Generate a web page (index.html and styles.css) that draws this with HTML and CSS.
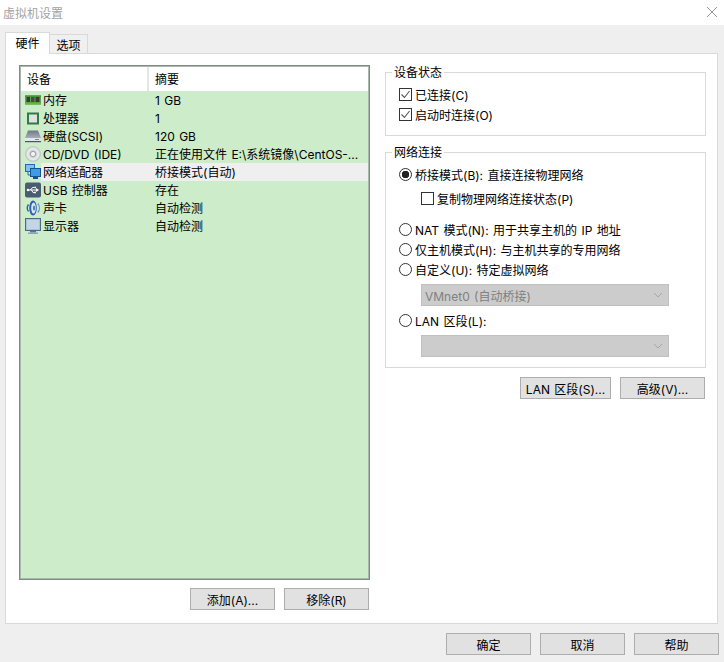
FILE: index.html
```html
<!DOCTYPE html>
<html lang="zh-CN">
<head>
<meta charset="utf-8">
<title>虚拟机设置</title>
<link rel="stylesheet" href="styles.css">
</head>
<body>
<div class="window">
  <div class="titlebar">
    <span>虚拟机设置</span>
    <svg class="close" viewBox="0 0 10 10"><path d="M0 0l10 10M10 0L0 10" fill="none" stroke="#777" stroke-width="0.800"/></svg>
  </div>
  <div class="content">
    <div class="tabs">
      <div class="tab active">硬件</div>
      <div class="tab">选项</div>
    </div>
    <div class="panel">
      <div class="left">
        <div class="list">
          <div class="list-head">
            <div class="col-device">设备</div>
            <div class="col-summary">摘要</div>
          </div>
          <div class="row">
            <div class="col-device">
              <svg class="icon" viewBox="0 0 16 16"><rect x="0" y="3.500" width="16" height="9" fill="#5aa845"/><rect x="0" y="3.500" width="16" height="1" fill="#3c7d2c"/><rect x="0" y="11.500" width="16" height="1.500" fill="#74c15c"/><rect x="1.500" y="5" width="3.500" height="5" fill="#3a3a3a"/><rect x="6" y="5" width="3.500" height="5" fill="#4a4a4a"/><rect x="10.500" y="5" width="4" height="5" fill="#3a3a3a"/></svg>
              <span class="name">内存</span>
            </div>
            <div class="col-summary">1 GB</div>
          </div>
          <div class="row">
            <div class="col-device">
              <svg class="icon" viewBox="0 0 16 16"><rect x="2" y="2.500" width="12" height="12" fill="#2f7a45"/><rect x="4" y="4.500" width="8" height="8" fill="#dfe2e0"/></svg>
              <span class="name">处理器</span>
            </div>
            <div class="col-summary">1</div>
          </div>
          <div class="row">
            <div class="col-device">
              <svg class="icon" viewBox="0 0 16 16"><defs><linearGradient id="hd" x1="0" y1="0" x2="0" y2="1"><stop offset="0" stop-color="#6f7a86"/><stop offset="1" stop-color="#a6afb8"/></linearGradient></defs><path d="M3 2.500h10l3 7.500H0z" fill="url(#hd)"/><rect x="0" y="10" width="16" height="4" fill="#e4e8ea"/><rect x="0" y="13" width="16" height="1.200" fill="#4b5560"/><rect x="10" y="11" width="4" height="1" fill="#7b8791"/></svg>
              <span class="name">硬盘(SCSI)</span>
            </div>
            <div class="col-summary">120 GB</div>
          </div>
          <div class="row">
            <div class="col-device">
              <svg class="icon" viewBox="0 0 16 16"><defs><radialGradient id="cd" cx="0.500" cy="0.500" r="0.500"><stop offset="0.300" stop-color="#c2c6c9"/><stop offset="0.700" stop-color="#eceeef"/><stop offset="1" stop-color="#b5babd"/></radialGradient></defs><circle cx="8" cy="8" r="7.800" fill="url(#cd)"/><circle cx="8" cy="8" r="2.600" fill="#f4f5f5" stroke="#8c9296" stroke-width="0.800"/></svg>
              <span class="name">CD/DVD (IDE)</span>
            </div>
            <div class="col-summary">正在使用文件 E:\系统镜像\CentOS-...</div>
          </div>
          <div class="row selected">
            <div class="col-device">
              <svg class="icon" viewBox="0 0 16 16"><rect x="0.500" y="0.500" width="9" height="7" fill="#7fc0ee" stroke="#1d6db5"/><path d="M3 8v3h3" fill="none" stroke="#1d6db5" stroke-width="1"/><rect x="5.500" y="4.500" width="10" height="8" fill="#3f9be4" stroke="#14558f"/><rect x="8" y="13" width="5" height="2" fill="#14558f"/></svg>
              <span class="name">网络适配器</span>
            </div>
            <div class="col-summary">桥接模式(自动)</div>
          </div>
          <div class="row">
            <div class="col-device">
              <svg class="icon" viewBox="0 0 16 16"><rect x="0" y="0.500" width="16" height="15" rx="2" fill="#4a5c6f"/><path d="M3.500 8h8M5.500 8l2-2.500h2M6.500 8l1.500 2.500h1.500" fill="none" stroke="#fff" stroke-width="1"/><path d="M11 6l3 2-3 2z" fill="#fff"/><circle cx="3" cy="8" r="1.300" fill="#fff"/><rect x="9.500" y="4.700" width="1.500" height="1.500" fill="#fff"/><circle cx="10" cy="10.500" r="1" fill="#fff"/></svg>
              <span class="name">USB 控制器</span>
            </div>
            <div class="col-summary">存在</div>
          </div>
          <div class="row">
            <div class="col-device">
              <svg class="icon" viewBox="0 0 16 16"><path d="M3.500 4.500a6 6 0 0 0 0 7" fill="none" stroke="#2f63a8" stroke-width="1.400"/><ellipse cx="8" cy="8" rx="3.800" ry="7.500" fill="#2a62ad"/><ellipse cx="8.500" cy="8" rx="2.300" ry="5.500" fill="#dbe7f3"/><ellipse cx="9" cy="8" rx="1" ry="2.600" fill="#3b78c2"/><path d="M12.800 3.500a7 7 0 0 1 0 9" fill="none" stroke="#6f9dd0" stroke-width="1.400"/></svg>
              <span class="name">声卡</span>
            </div>
            <div class="col-summary">自动检测</div>
          </div>
          <div class="row">
            <div class="col-device">
              <svg class="icon" viewBox="0 0 16 16"><rect x="0.500" y="0.500" width="15" height="12" fill="#a7c3dc" stroke="#4a6a88"/><rect x="2" y="2" width="12" height="9" fill="#c4d6e6"/><rect x="5" y="13" width="6" height="1.500" fill="#5c7690"/><rect x="3" y="14.500" width="10" height="1.500" fill="#8ea4b8"/></svg>
              <span class="name">显示器</span>
            </div>
            <div class="col-summary">自动检测</div>
          </div>
        </div>
        <div class="button-row list-buttons">
          <button class="btn" type="button">添加(A)...</button>
          <button class="btn" type="button">移除(R)</button>
        </div>
      </div>
      <div class="right">
        <fieldset class="group status">
          <legend>设备状态</legend>
          <div class="option"><span class="check on"><svg viewBox="0 0 11 11"><path d="M1.500 5.500l3 3 5-6.500" fill="none" stroke="#555" stroke-width="1.100"/></svg></span>已连接(C)</div>
          <div class="option"><span class="check on"><svg viewBox="0 0 11 11"><path d="M1.500 5.500l3 3 5-6.500" fill="none" stroke="#555" stroke-width="1.100"/></svg></span>启动时连接(O)</div>
        </fieldset>
        <fieldset class="group network">
          <legend>网络连接</legend>
          <div class="option"><span class="radio on"></span>桥接模式(B): 直接连接物理网络</div>
          <div class="option sub replicate"><span class="check"></span>复制物理网络连接状态(P)</div>
          <div class="option nat"><span class="radio"></span>NAT 模式(N): 用于共享主机的 IP 地址</div>
          <div class="option"><span class="radio"></span>仅主机模式(H): 与主机共享的专用网络</div>
          <div class="option"><span class="radio"></span>自定义(U): 特定虚拟网络</div>
          <div class="select"><span>VMnet0 (自动桥接)</span><svg class="chev" viewBox="0 0 10 6"><path d="M1 1l4 4 4-4" fill="none" stroke="#a6a6a6"/></svg></div>
          <div class="option lan"><span class="radio"></span>LAN 区段(L):</div>
          <div class="select"><span></span><svg class="chev" viewBox="0 0 10 6"><path d="M1 1l4 4 4-4" fill="none" stroke="#a6a6a6"/></svg></div>
        </fieldset>
        <div class="button-row net-buttons">
          <button class="btn wide" type="button">LAN 区段(S)...</button>
          <button class="btn" type="button">高级(V)...</button>
        </div>
      </div>
    </div>
    <div class="button-row footer">
      <button class="btn footer-btn" type="button">确定</button>
      <button class="btn footer-btn" type="button">取消</button>
      <button class="btn footer-btn" type="button">帮助</button>
    </div>
  </div>
</div>
</body>
</html>
```

FILE: styles.css
```css
* { box-sizing: border-box; }
html, body { margin: 0; padding: 0; }
body {
  width: 724px;
  height: 662px;
  overflow: hidden;
  font-family: Inter, "Noto Sans CJK SC", sans-serif;
  font-size: 12px;
  word-spacing: 1px;
  color: #000;
  background: #fff;
}
.window { display: flex; flex-direction: column; height: 662px; }
.titlebar {
  height: 25px;
  padding: 0 7px 1px 3px;
  display: flex;
  align-items: center;
  justify-content: space-between;
  color: #a3a3a3;
  background: #fff;
}
.close { width: 10px; height: 10px; }
.content {
  flex: 1;
  display: flex;
  flex-direction: column;
  background: #efefef;
  padding: 7px 6px 0 5px;
}
.tabs { display: flex; align-items: flex-end; height: 21px; position: relative; z-index: 1; }
.tab {
  height: 19px;
  width: 38px;
  text-align: center;
  line-height: 21px;
  background: #f0f0f0;
  border: 1px solid #d9d9d9;
  border-bottom: 0;
  border-left: 0;
}
.tab.active {
  height: 22px;
  width: 45px;
  margin-bottom: -1px;
  background: #fff;
  border-left: 1px solid #d9d9d9;
  line-height: 21px;
}
.panel {
  height: 571px;
  display: flex;
  background: #fff;
  border: 1px solid #d9d9d9;
  padding: 11px 11px 0 13px;
}
.left { width: 351px; flex: none; display: flex; flex-direction: column; }
.list {
  height: 515px;
  padding: 1px;
  background: #cdecc9;
  border: 1px solid #7f8c84;
  box-shadow: inset 0 0 0 1px #a9b7ad;
}
.list-head { display: flex; height: 24px; background: #fff; line-height: 26px; }
.list-head .col-device { align-items: flex-start; border-right: 2px solid #e6e6e6; padding-left: 6px; }
.col-device { width: 128px; flex: none; display: flex; align-items: center; }
.col-summary { flex: 1; padding-left: 6px; white-space: nowrap; }
.row { display: flex; height: 18px; line-height: 20px; }
.row .col-device { padding-left: 4px; }
.icon { width: 16px; height: 16px; flex: none; margin-right: 2px; }
.name { padding: 0 1px 0 0; white-space: nowrap; height: 18px; }
.row.selected { background: linear-gradient(to right, transparent 20px, #efefef 20px); }
.button-row { display: flex; justify-content: flex-end; gap: 9px; }
.list-buttons { margin-top: 8px; padding-right: 1px; }
.btn {
  width: 85px;
  height: 22px;
  padding: 0;
  font: inherit;
  word-spacing: inherit;
  color: #000;
  background: #e1e1e1;
  border: 1px solid #adadad;
  border-radius: 0;
}
.btn.wide { width: 91px; }
.right { width: 321px; flex: none; margin-left: 15px; display: flex; flex-direction: column; }
.group {
  margin: 0;
  padding: 0 0 0 13px;
  min-width: 0;
  border: 1px solid #d9d9d9;
}
.group legend { margin-left: -7px; padding: 0 2px; line-height: 18px; height: 16px; }
.status { height: 72px; margin-top: -1px; padding-top: 4px; }
.network { height: 224px; margin-top: 8px; padding-top: 4px; }
.option { display: flex; align-items: center; height: 20px; white-space: nowrap; }
.check {
  width: 13px;
  height: 13px;
  flex: none;
  margin-right: 3px;
  border: 1px solid #333;
  background: #fff;
  display: block;
}
.check svg { display: block; width: 11px; height: 11px; }
.radio {
  width: 13px;
  height: 13px;
  flex: none;
  margin-right: 3px;
  border: 1px solid #333;
  border-radius: 50%;
  background: #fff;
  display: block;
}
.radio.on { background: radial-gradient(circle, #222 0 3.500px, #fff 4px); }
.sub { margin-left: 22px; }
.replicate { margin-top: 4px; }
.nat { margin-top: 11px; }
.lan { margin-top: 4px; }
.select {
  width: 248px;
  height: 22px;
  margin: 5px 0 0 22px;
  padding: 0 5px 0 3px;
  display: flex;
  align-items: center;
  justify-content: space-between;
  background: #cccccc;
  border: 1px solid #c0c0c0;
  color: #808080;
}
.lan + .select { margin-top: 5px; }
.chev { width: 10px; height: 6px; }
.net-buttons { margin-top: 9px; padding-right: 1px; }
.footer { margin-top: 9px; margin-right: -1px; }
```
